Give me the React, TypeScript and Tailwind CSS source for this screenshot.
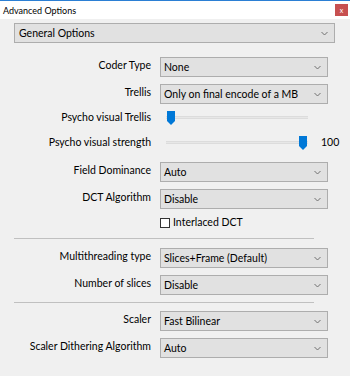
import React from 'react';

const font = { fontFamily: 'Lato, "Noto Sans", sans-serif' };

function Chevron() {
  return (
    <svg width="7" height="5" viewBox="0 0 7 5" className="shrink-0">
      <path d="M0.5 1 L3.5 4 L6.5 1" fill="none" stroke="#707070" strokeWidth="1" />
    </svg>
  );
}

function Combo({ value, className = '' }: { value: string; className?: string }) {
  return (
    <div
      className={`h-[20px] flex items-center justify-between border border-[#adadad] bg-[#e1e1e1] pl-[3px] pr-[6px] text-[10.5px] text-black ${className}`}
    >
      <span className="leading-none whitespace-nowrap pt-px">{value}</span>
      <Chevron />
    </div>
  );
}

function Row({ label, value, className = '' }: { label: string; value: string; className?: string }) {
  return (
    <div className={`flex items-start ${className}`}>
      <div className="w-[151px] text-right text-[10.5px] leading-[16px] text-black whitespace-nowrap">{label}</div>
      <Combo value={value} className="ml-[9px] w-[168px]" />
    </div>
  );
}

function Slider({ label, pos, value, className = '' }: { label: string; pos: number; value?: string; className?: string }) {
  return (
    <div className={`flex items-center h-[20px] ${className}`}>
      <div className="w-[151px] text-right text-[10.5px] text-black whitespace-nowrap">{label}</div>
      <div className="relative ml-[15px] w-[142px] h-[20px]">
        <div className="absolute left-0 right-0 top-[8px] h-[3px] bg-[#e7e7e7] border-y border-[#dcdcdc]" />
        <svg
          width="8"
          height="14"
          viewBox="0 0 8 14"
          className="absolute top-[3px]"
          style={{ left: pos }}
        >
          <path d="M0 0 H8 V10 L4 14 L0 10 Z" fill="#0078d7" />
        </svg>
      </div>
      {value && <div className="ml-[13px] text-[10.5px] text-black">{value}</div>}
    </div>
  );
}

function Separator({ className = '' }: { className?: string }) {
  return <div className={`ml-[14px] w-[300px] h-px bg-[#c0c0c0] ${className}`} />;
}

export default function App() {
  return (
    <div className="w-[350px] h-[376px] bg-[#f0f0f0] flex flex-col overflow-hidden" style={font}>
      <div className="h-[19px] bg-white border-t border-[#2b7fd4] flex items-center justify-between pl-[3px] pr-[2px]">
        <span className="text-[9px] text-black leading-none">Advanced Options</span>
        <div className="w-[13px] h-[12px] bg-[#c75050] flex items-center justify-center text-white text-[7px] leading-none">
          x
        </div>
      </div>

      <Combo value="General Options" className="mt-[4px] ml-[14px] w-[321px] pl-[4px]" />

      <Row label="Coder Type" value="None" className="mt-[14px]" />
      <Row label="Trellis" value="Only on final encode of a MB" className="mt-[7px]" />
      <Slider label="Psycho visual Trellis" pos={1} className="mt-[4px]" />
      <Slider label="Psycho visual strength" pos={133} value="100" className="mt-[5px]" />
      <Row label="Field Dominance" value="Auto" className="mt-[9px]" />
      <Row label="DCT Algorithm" value="Disable" className="mt-[7px]" />

      <div className="mt-[7px] h-[13px] flex items-center ml-[160px]">
        <div className="w-[10px] h-[10px] border border-[#333] bg-white" />
        <span className="ml-[3px] text-[10.5px] text-black leading-none">Interlaced DCT</span>
      </div>

      <Separator className="mt-[9px]" />
      <Row label="Multithreading type" value="Slices+Frame (Default)" className="mt-[9px]" />
      <Row label="Number of slices" value="Disable" className="mt-[7px]" />
      <Separator className="mt-[7px]" />
      <Row label="Scaler" value="Fast Bilinear" className="mt-[8px]" />
      <Row label="Scaler Dithering Algorithm" value="Auto" className="mt-[7px]" />
    </div>
  );
}
